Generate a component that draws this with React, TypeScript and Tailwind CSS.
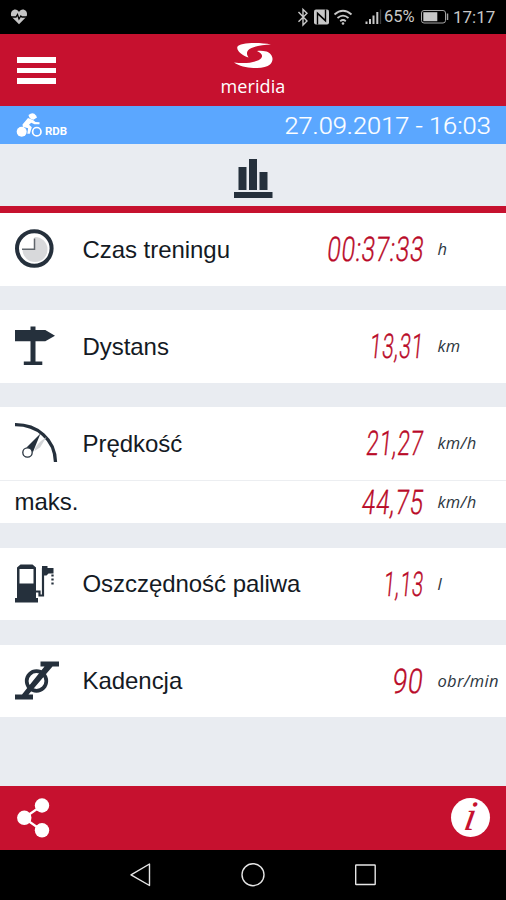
import type { ReactNode } from 'react';
import clsx from 'clsx';

const INK = '#25303c';

function StatusBar() {
  return (
    <div className="flex h-[34px] shrink-0 items-center bg-black text-[#c8c8c8]">
      <svg width="18" height="16" viewBox="0 0 18 16" className="ml-[10px]">
        <path d="M9 15.2 2.3 8.5C.2 6.300.6 2 3.500.9 5.700 0 8 1 9 3 10 1 12.300 0 14.500.9 17.400 2 17.800 6.300 15.700 8.500Z" fill="#c4c4c4" />
        <path d="M1 8h5l1.500-2.500L9 10l1.800-3 1.200 1h5" fill="none" stroke="#000" strokeWidth="1.300" />
      </svg>
      <svg width="88" height="20" viewBox="296 7 88 20" fill="none" className="ml-auto">
        <path d="m298.500 12 8.500 9-4 4V9.500l4 3.800-8.500 8.500" stroke="#c8c8c8" strokeWidth="1.400" />
        <rect x="314" y="9.500" width="15" height="15" rx="2" fill="#c8c8c8" />
        <path d="M317.500 24.500V13l8 7.500M325.500 9.500V21l-8-7.500" stroke="#000" strokeWidth="1.400" />
        <path d="M334.500 14.500q8.500-7.500 17 0M337.500 18q5.500-4.800 11 0M340.200 21.200q2.800-2.300 5.600 0" stroke="#c8c8c8" strokeWidth="1.800" />
        <circle cx="343" cy="23.500" r="1.300" fill="#c8c8c8" />
        <path d="M366.500 21.500V24M370 19v5M373.500 15.500V24M377.300 12v12" stroke="#c8c8c8" strokeWidth="2" />
        <path d="M380.500 9.500V24" stroke="#3c3c3c" strokeWidth="1.300" />
      </svg>
      <span className="w-[32px] font-['Roboto'] text-[16.500px] leading-none">65%</span>
      <svg width="30" height="16" viewBox="418 9 30 16" className="ml-[3px]">
        <rect x="420.500" y="10.500" width="24" height="12.500" rx="2.500" fill="none" stroke="#a5a5a5" />
        <rect x="422.300" y="12.200" width="14" height="9" fill="#c8c8c8" />
        <path d="M446.500 13.500v6.500" stroke="#a5a5a5" strokeWidth="1.500" />
      </svg>
      <span className="mr-[11px] ml-[4px] w-[42px] whitespace-nowrap font-['Roboto'] text-[17px] leading-none">17:17</span>
    </div>
  );
}

function Header() {
  return (
    <header className="grid h-[72px] shrink-0 grid-cols-[1fr_auto_1fr] items-start bg-[#c6112f] text-white">
      <button aria-label="Menu" className="mt-[23px] ml-[17px] flex w-[39px] flex-col gap-[5px]">
        <span className="h-[5.500px] w-full bg-white" />
        <span className="h-[5.500px] w-full bg-white" />
        <span className="h-[5.500px] w-full bg-white" />
      </button>
      <div className="flex flex-col items-center">
        <svg width="40" height="26" viewBox="233 42 40 26" className="mt-[8px]" fill="#fff">
          <path d="M271 44.500C259 42 239 42.500 237.300 47 236.500 51 242 55.500 248.500 57.500 245.500 53 247 50 251.500 48 257 45.500 264 44.800 271 44.500Z" />
          <path d="M234 62.500C244 69.500 264 69.500 270 64.500 275 59.500 272 53.500 266.500 51.500 263 50.800 260 50.700 257 51 263.500 54 263.500 57.500 258.500 60.300 251 63.500 243 63.500 234 62.500Z" />
        </svg>
        <span className="mt-[7px] font-['Open_Sans'] text-[18px] leading-[22px] tracking-[0.1px]">meridia</span>
      </div>
    </header>
  );
}

function DateBar() {
  return (
    <div className="flex h-[38px] shrink-0 items-center bg-[#5ba7ff] text-white">
      <svg width="28" height="28" viewBox="15 111 28 28" className="ml-[15px]">
        <circle cx="21.700" cy="131.700" r="5" fill="#fff" />
        <circle cx="36.800" cy="131.700" r="4.200" fill="none" stroke="#fff" strokeWidth="1.700" />
        <path d="M28.500 115q4.500-3.500 7.500.5l1 2-3.500 2.300q-4.500-.8-5-4.800Z" fill="#fff" />
        <path d="M22.500 124.500 28 118l5 2 2.500 2 4 .2v2h-5l-3.300-1.500-2.200 2 2.800 2.500-2 6.500h-2.500l.8-5.500-5.300-1.500Z" fill="#fff" />
      </svg>
      <span className="mt-[14px] ml-[2px] font-['Roboto'] text-[11.500px] leading-none font-bold">RDB</span>
      <span className="mt-[2px] mr-[15px] ml-auto origin-right scale-x-[1.105] font-['Roboto'] text-[23px] leading-none font-light whitespace-nowrap [-webkit-text-stroke:0.2px_white]">
        27.09.2017 - 16:03
      </span>
    </div>
  );
}

function ChartTab() {
  return (
    <div className="flex h-[69px] shrink-0 justify-center border-b-[7px] border-[#c6112f] bg-[#e9ecf1]">
      <svg width="40" height="42" viewBox="233 157 40 42" className="mt-[13px]">
        <path d="M238.500 167h8v23h-8zM249 159h8v31h-8zM259.500 172h8v18h-8zM234 192h38.500v6H234z" fill={INK} />
      </svg>
    </div>
  );
}

const icons: Record<string, ReactNode> = {
  clock: (
    <svg width="50" height="50" viewBox="10 224 50 50">
      <circle cx="34.300" cy="248.500" r="17.300" fill="#fff" stroke={INK} strokeWidth="4" />
      <path d="M34.500 237a12.500 12.500 0 1 1-12 12.500h12Z" fill="#d8d9db" />
      <path d="M34.500 238.500v10.800H22" fill="none" stroke="#60666c" strokeWidth="1.500" />
    </svg>
  ),
  sign: (
    <svg width="50" height="50" viewBox="10 321 50 50" fill={INK}>
      <path d="M30.500 326.500h5v3.500h9.800l9.700 5.700-9.700 5.600h-9.800V361.500h6.800v3.500H23.800v-3.500h6.700v-20.200H15V330h15.500Z" />
    </svg>
  ),
  gauge: (
    <svg width="50" height="50" viewBox="10 418 50 50">
      <path d="M15 424.700C37 424.500 55 439 55.500 462" fill="none" stroke={INK} strokeWidth="3.300" />
      <path d="M46.500 437 40 447.500 34.500 451q.5-6.500 12-14Z" fill="#d3d5d8" />
      <path d="m40.500 433.500-14 14 6.500 4.500Z" fill={INK} />
      <circle cx="27.500" cy="452.500" r="4.700" fill="#fff" stroke={INK} strokeWidth="1.300" />
    </svg>
  ),
  fuel: (
    <svg width="50" height="50" viewBox="10 559 50 50">
      <path d="M20.500 564.500h12l3.500 3V598h2v4.500H15V598h2v-30.500ZM19.500 569v14.500h14V569Z" fill={INK} fillRule="evenodd" />
      <path d="M36 591.500h3.500v4H43V568" fill="none" stroke={INK} strokeWidth="2.200" />
      <path d="M42 566h5.500v2h6v5.500h-5l-2 2H42Z" fill={INK} />
      <path d="M52.500 574.500v10" stroke={INK} strokeWidth="2.300" strokeDasharray="2 2" />
    </svg>
  ),
  crank: (
    <svg width="50" height="50" viewBox="10 656 50 50">
      <circle cx="36.500" cy="681" r="9.800" fill="none" stroke={INK} strokeWidth="3.700" />
      <path d="M40.500 661.500H59v5h-6.500L28.500 694.500H33v5H15v-5h7l22.500-28h-4Z" fill={INK} />
    </svg>
  ),
};

type Stat = {
  icon?: string;
  label: string;
  value: string;
  unit: string;
  stretch: string;
};

function StatRow({ icon, label, value, unit, stretch }: Stat) {
  return (
    <div
      className={clsx(
        'flex shrink-0 items-center bg-white',
        icon ? 'h-[72.500px]' : 'h-[43.500px] border-t border-[#eceef1]',
      )}
    >
      {icon && <div className="w-[73px] shrink-0 pl-[10px]">{icons[icon]}</div>}
      <span className={clsx("pt-px font-['Liberation_Sans'] text-[24px] leading-none tracking-[-0.05px] text-[#141a24]", icon ? 'pl-[9.500px]' : 'pl-[14.500px]')}>
        {label}
      </span>
      <span
        className={clsx(
          "ml-auto origin-right -skew-x-[9deg] font-['Roboto'] text-[34px] leading-none font-light tracking-[1px] whitespace-nowrap text-[#b90a28] [-webkit-text-stroke:0.4px_#b90a28]",
          stretch,
        )}
      >
        {value}
      </span>
      <span className="w-[82px] shrink-0 pl-[13.500px] font-['Open_Sans'] text-[16.500px] leading-none tracking-[0.300px] whitespace-nowrap text-[#2d3640] italic">
        {unit}
      </span>
    </div>
  );
}

function BottomBar() {
  return (
    <footer className="mt-auto flex h-[63.500px] shrink-0 items-center justify-between bg-[#c6112f] pr-[16px] pl-[17px]">
      <svg width="33" height="40" viewBox="17 797.500 33 40" fill="#fff">
        <path d="m42 805-18 12.500L42 830" fill="none" stroke="#fff" strokeWidth="2.200" />
        <circle cx="42" cy="805" r="7.200" />
        <circle cx="24.300" cy="817.300" r="7.200" />
        <circle cx="42" cy="829.800" r="7.200" />
      </svg>
      <div className="flex size-[39px] items-center justify-center rounded-full bg-white font-['Liberation_Serif'] text-[42px] leading-none text-[#c6112f] italic">
        <span className="-mt-[3px] -skew-x-[10deg]">i</span>
      </div>
    </footer>
  );
}

function NavBar() {
  return (
    <nav className="flex h-[50.500px] shrink-0 items-center justify-center bg-black">
      <svg width="250" height="26" viewBox="128 862 250 26" fill="none" stroke="#e6e6e6" strokeWidth="1.400">
        <path d="M149.500 864v21.500l-18.500-10.700Z" strokeLinejoin="round" />
        <circle cx="253" cy="874.700" r="11" />
        <rect x="355.700" y="865" width="19.500" height="19.500" rx="0.500" />
      </svg>
    </nav>
  );
}

export default function App() {
  return (
    <div className="flex h-[900px] w-[506px] flex-col overflow-hidden bg-[#e9ecf1]">
      <StatusBar />
      <Header />
      <DateBar />
      <ChartTab />
      <main className="flex flex-col gap-[24.500px]">
        <StatRow icon="clock" label="Czas treningu" value="00:37:33" unit="h" stretch="scale-x-[0.715]" />
        <StatRow icon="sign" label="Dystans" value="13,31" unit="km" stretch="scale-x-[0.620]" />
        <section>
          <StatRow icon="gauge" label="Prędkość" value="21,27" unit="km/h" stretch="scale-x-[0.660]" />
          <StatRow label="maks." value="44,75" unit="km/h" stretch="scale-x-[0.710]" />
        </section>
        <StatRow icon="fuel" label="Oszczędność paliwa" value="1,13" unit="l" stretch="scale-x-[0.600]" />
        <StatRow icon="crank" label="Kadencja" value="90" unit="obr/min" stretch="scale-x-[0.780]" />
      </main>
      <BottomBar />
      <NavBar />
    </div>
  );
}
